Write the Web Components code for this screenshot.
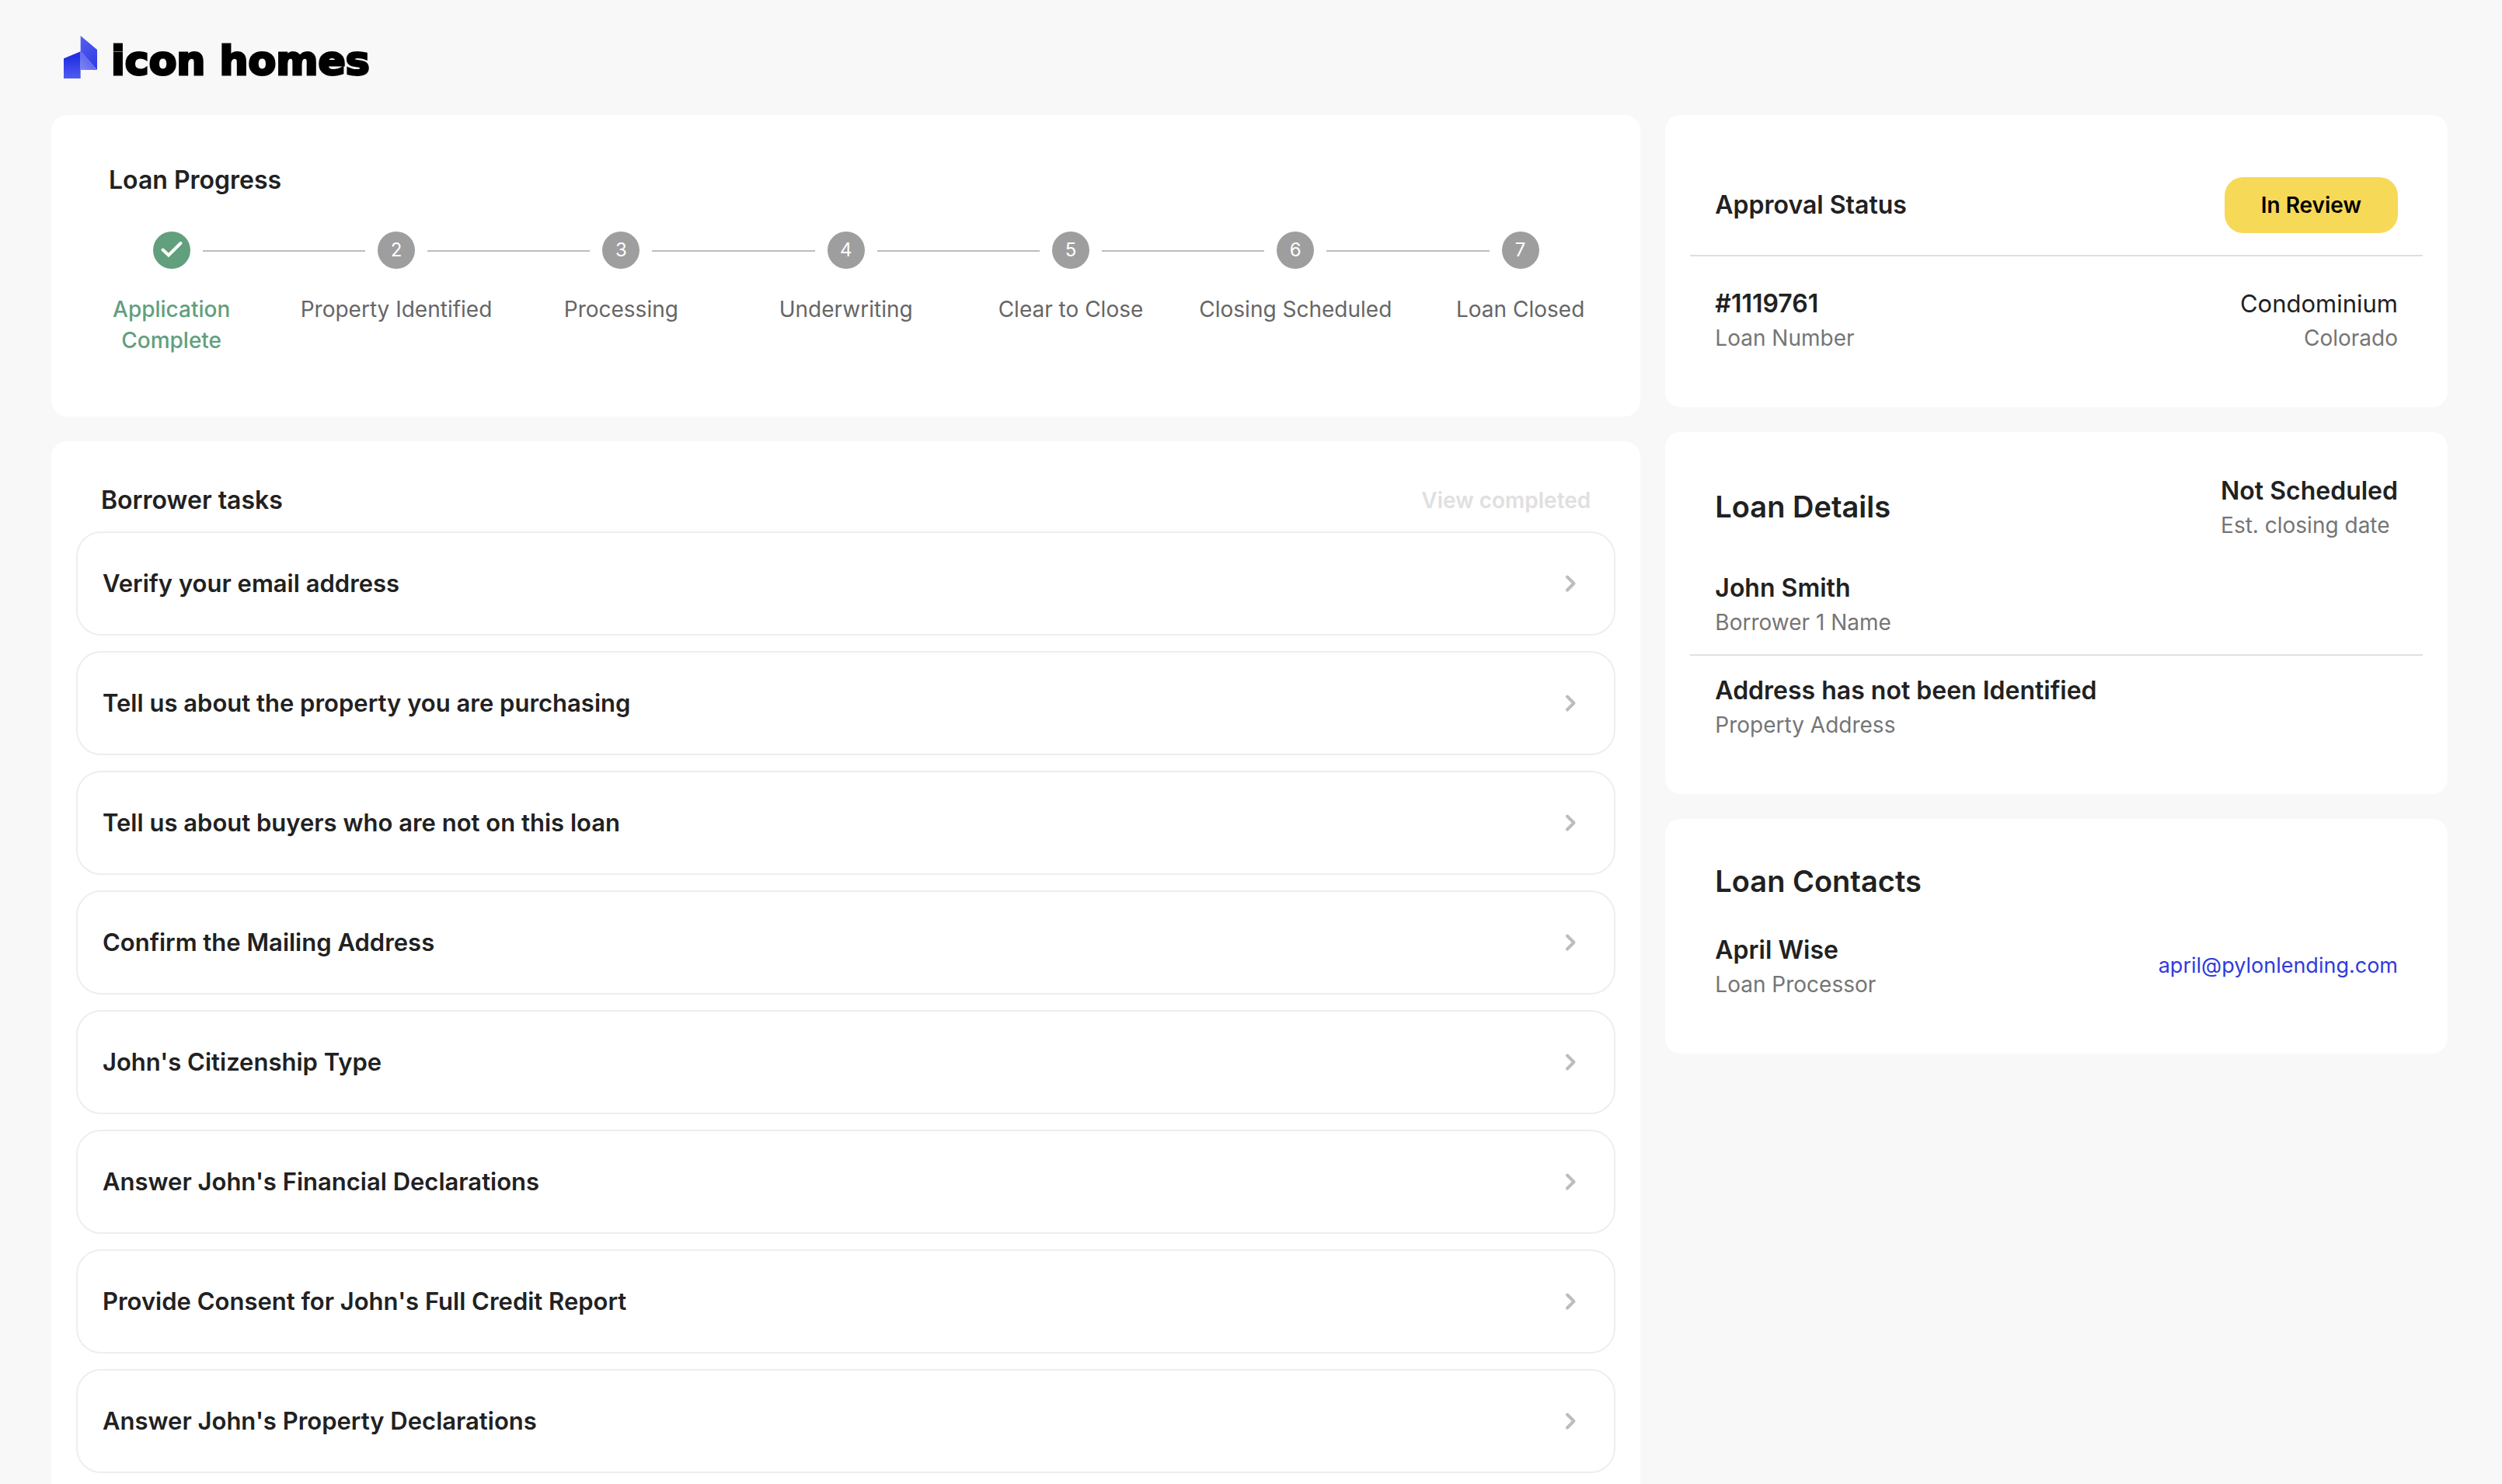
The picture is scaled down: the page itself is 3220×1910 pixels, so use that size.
<!DOCTYPE html>
<html lang="en">
<head>
<meta charset="utf-8">
<meta name="viewport" content="width=device-width, initial-scale=1">
<title>Icon Homes</title>
<style>
    body {
        margin: 0;
        background: #f8f8f8;
        color: #212121;
        font-family: Inter, "Liberation Sans", sans-serif;
        font-size: 28px;
        line-height: 40px;
    }
</style>
</head>
<body>

<loan-dashboard>
    <brand-logo slot="header">icon homes</brand-logo>

    <loan-progress heading="Loan Progress">
        <progress-step number="1" complete>Application Complete</progress-step>
        <progress-step number="2">Property Identified</progress-step>
        <progress-step number="3">Processing</progress-step>
        <progress-step number="4">Underwriting</progress-step>
        <progress-step number="5">Clear to Close</progress-step>
        <progress-step number="6">Closing Scheduled</progress-step>
        <progress-step number="7">Loan Closed</progress-step>
    </loan-progress>

    <task-list heading="Borrower tasks" action="View completed">
        <task-item>Verify your email address</task-item>
        <task-item>Tell us about the property you are purchasing</task-item>
        <task-item>Tell us about buyers who are not on this loan</task-item>
        <task-item>Confirm the Mailing Address</task-item>
        <task-item>John's Citizenship Type</task-item>
        <task-item>Answer John's Financial Declarations</task-item>
        <task-item>Provide Consent for John's Full Credit Report</task-item>
        <task-item>Answer John's Property Declarations</task-item>
    </task-list>

    <approval-status slot="side" heading="Approval Status" status="In Review">
        <info-pair label="Loan Number">#1119761</info-pair>
        <info-pair label="Colorado" align="end" light>Condominium</info-pair>
    </approval-status>

    <loan-details slot="side" heading="Loan Details">
        <info-pair slot="closing" label="Est. closing date">Not Scheduled</info-pair>
        <info-pair slot="borrower" label="Borrower 1 Name">John Smith</info-pair>
        <info-pair slot="address" label="Property Address">Address has not been Identified</info-pair>
    </loan-details>

    <loan-contacts slot="side" heading="Loan Contacts">
        <contact-row email="april@pylonlending.com">
            <info-pair label="Loan Processor">April Wise</info-pair>
        </contact-row>
    </loan-contacts>
</loan-dashboard>

<script>
// Attaches an open shadow root filled from the given markup
class BaseElement extends HTMLElement {

    connectedCallback(){
        if (this.shadowRoot) return;

        const template = document.createElement('template');
        template.innerHTML = this.render();
        this.attachShadow({mode: 'open'});
        this.shadowRoot.appendChild(template.content.cloneNode(true));
    }

    attr(name){
        return this.getAttribute(name) || '';
    }
}

// Shared by every white panel
const cardStyles = `
    :host{
        display: block;
        background: #fff;
        border-radius: 20px;
    }

    h2, h3{
        margin: 0;
        font-weight: 600;
    }

    h2{
        font-size: 38px;
        line-height: 64px;
    }

    h3{
        font-size: 32px;
        line-height: 48px;
    }

    hr{
        margin: 0 32px;
        border: 0;
        border-top: 2px solid #e0e0e0;
    }

    .row{
        display: flex;
        justify-content: space-between;
        align-items: center;
        padding: 0 64px;
    }
`;

class LoanDashboard extends BaseElement {
    render(){
        return `
        <style>
            :host{
                display: block;
                padding: 0 70px 32px 66px;
            }

            main{
                display: grid;
                grid-template-columns: repeat(3, minmax(0, 1fr));
                gap: 32px;
                align-items: start;
            }

            .column{
                display: flex;
                flex-direction: column;
                gap: 32px;
            }

            .wide{
                grid-column: span 2;
            }
        </style>
        <header><slot name="header"></slot></header>
        <main>
            <div class="column wide"><slot></slot></div>
            <div class="column"><slot name="side"></slot></div>
        </main>`;
    }
}
customElements.define('loan-dashboard', LoanDashboard);

class BrandLogo extends BaseElement {
    render(){
        return `
        <style>
            :host{
                display: flex;
                align-items: flex-end;
                gap: 18px;
                padding: 46px 16px 47px;
                color: #000;
                font: bold 52px/46px "DejaVu Sans", sans-serif;
                -webkit-text-stroke: 3px #000;
            }

            svg{
                width: 43px;
                height: 55px;
            }
        </style>
        <svg viewBox="0 0 129 165" aria-hidden="true">
            <defs>
                <linearGradient id="front" x1="0" y1="0" x2="0" y2="1">
                    <stop offset="0.2" stop-color="#232fe2"/>
                    <stop offset="1" stop-color="#4f5cf2"/>
                </linearGradient>
                <linearGradient id="tower" x1="0" y1="0" x2="0.6" y2="1">
                    <stop offset="0" stop-color="#5560f0"/>
                    <stop offset="1" stop-color="#3340e6"/>
                </linearGradient>
                <linearGradient id="base" x1="1" y1="0" x2="0" y2="1">
                    <stop offset="0.3" stop-color="#5560ee"/>
                    <stop offset="1" stop-color="#7d86f6"/>
                </linearGradient>
            </defs>
            <path fill="url(#front)" d="M0 88 65 61V165H0Z"/>
            <path fill="url(#tower)" d="M65 0 129 54V132L65 61Z"/>
            <path fill="url(#base)" d="M65 61 129 132H65Z"/>
        </svg>
        <span><slot></slot></span>`;
    }
}
customElements.define('brand-logo', BrandLogo);

class LoanProgress extends BaseElement {
    render(){
        return `
        <style>
            ${cardStyles}

            :host{
                padding: 60px 10px 78px;
            }

            h3{
                padding: 0 64px;
            }

            .steps{
                display: flex;
                margin-top: 42px;
            }
        </style>
        <h3>${this.attr('heading')}</h3>
        <div class="steps" role="list"><slot></slot></div>`;
    }
}
customElements.define('loan-progress', LoanProgress);

class ProgressStep extends BaseElement {
    render(){
        const icon = this.hasAttribute('complete')
            ? '<svg viewBox="0 0 48 48" aria-label="Complete"><path d="M12.5 23.5 20 30.5 35.5 15"/></svg>'
            : this.attr('number');

        return `
        <style>
            :host{
                flex: 1 1 0;
                min-width: 0;
                color: #666;
                text-align: center;
            }

            :host([complete]){
                color: #629f7d;
                font-weight: 500;
            }

            .track{
                display: flex;
                gap: 16px;
            }

            /* half of the connector on each side of the circle */
            .line{
                flex: 1;
                box-sizing: border-box;
                height: 24px;
                align-self: flex-end;
                border-top: 2px solid #bdbdbd;
            }

            :host(:first-child) .before,
            :host(:last-child) .after{
                border-color: transparent;
            }

            .circle{
                width: 48px;
                height: 48px;
                border-radius: 50%;
                background: #9e9e9e;
                color: #fff;
                font-size: 24px;
                line-height: 48px;
            }

            :host([complete]) .circle{
                background: #629f7d;
            }

            svg{
                display: block;
                fill: none;
                stroke: #fff;
                stroke-width: 4;
                stroke-linecap: round;
            }

            .label{
                padding: 32px 16px 0;
            }
        </style>
        <div class="track">
            <div class="line before"></div>
            <div class="circle">${icon}</div>
            <div class="line after"></div>
        </div>
        <div class="label"><slot></slot></div>`;
    }

    connectedCallback(){
        super.connectedCallback();
        this.setAttribute('role', 'listitem');
    }
}
customElements.define('progress-step', ProgressStep);

class TaskList extends BaseElement {
    render(){
        return `
        <style>
            ${cardStyles}

            :host{
                padding: 32px;
            }

            .row{
                padding: 20px 32px 16px;
            }

            button{
                padding: 0;
                border: 0;
                background: none;
                color: #e0e0e0;
                font: inherit;
                font-weight: 600;
            }

            .tasks{
                display: flex;
                flex-direction: column;
                gap: 20px;
            }
        </style>
        <div class="row">
            <h3>${this.attr('heading')}</h3>
            <button type="button" disabled>${this.attr('action')}</button>
        </div>
        <div class="tasks"><slot></slot></div>`;
    }
}
customElements.define('task-list', TaskList);

class TaskItem extends BaseElement {
    render(){
        return `
        <style>
            :host{
                display: block;
            }

            button{
                display: flex;
                justify-content: space-between;
                align-items: center;
                width: 100%;
                padding: 41px 32px;
                border: 2px solid #eee;
                border-radius: 32px;
                background: #fff;
                color: inherit;
                font: inherit;
                font-size: 31px;
                font-weight: 600;
                line-height: 48px;
                text-align: left;
                cursor: pointer;
            }

            svg{
                width: 48px;
                height: 48px;
                fill: none;
                stroke: #bdbdbd;
                stroke-width: 4;
                stroke-linecap: round;
                stroke-linejoin: round;
            }
        </style>
        <button type="button">
            <span><slot></slot></span>
            <svg viewBox="0 0 48 48" aria-hidden="true"><path d="M20 15.5 28.5 24 20 32.5"/></svg>
        </button>`;
    }
}
customElements.define('task-item', TaskItem);

// A value with its caption underneath
class InfoPair extends BaseElement {
    render(){
        return `
        <style>
            :host{
                display: block;
            }

            :host([align="end"]){
                text-align: right;
            }

            .value{
                font-size: 32px;
                font-weight: 600;
                line-height: 48px;
            }

            :host([light]) .value{
                font-size: 31px;
                font-weight: 400;
            }

            .label{
                color: #757575;
            }
        </style>
        <div class="value"><slot></slot></div>
        <div class="label">${this.attr('label')}</div>`;
    }
}
customElements.define('info-pair', InfoPair);

class ApprovalStatus extends BaseElement {
    render(){
        return `
        <style>
            ${cardStyles}

            :host{
                padding: 80px 0 69px;
            }

            hr{
                margin-top: 28px;
                margin-bottom: 37px;
            }

            .badge{
                padding: 16px 47px;
                border-radius: 24px;
                background: #f7d958;
                color: #000;
                font-weight: 600;
            }
        </style>
        <div class="row">
            <h3>${this.attr('heading')}</h3>
            <span class="badge">${this.attr('status')}</span>
        </div>
        <hr>
        <div class="row"><slot></slot></div>`;
    }
}
customElements.define('approval-status', ApprovalStatus);

class LoanDetails extends BaseElement {
    render(){
        return `
        <style>
            ${cardStyles}

            :host{
                padding: 52px 0 69px;
            }

            .borrower{
                padding-top: 37px;
                padding-bottom: 21px;
            }

            .address{
                padding-top: 21px;
            }
        </style>
        <div class="row">
            <h2>${this.attr('heading')}</h2>
            <slot name="closing"></slot>
        </div>
        <div class="row borrower"><slot name="borrower"></slot></div>
        <hr>
        <div class="row address"><slot name="address"></slot></div>`;
    }
}
customElements.define('loan-details', LoanDetails);

class LoanContacts extends BaseElement {
    render(){
        return `
        <style>
            ${cardStyles}

            :host{
                padding: 48px 64px 69px;
            }

            h2{
                margin-bottom: 33px;
            }
        </style>
        <h2>${this.attr('heading')}</h2>
        <slot></slot>`;
    }
}
customElements.define('loan-contacts', LoanContacts);

class ContactRow extends BaseElement {
    render(){
        const email = this.attr('email');

        return `
        <style>
            :host{
                display: flex;
                justify-content: space-between;
                align-items: center;
            }

            a{
                color: #303bdc;
                font-size: 27px;
                text-decoration: none;
            }
        </style>
        <slot></slot>
        <a href="mailto:${email}">${email}</a>`;
    }
}
customElements.define('contact-row', ContactRow);
</script>
</body>
</html>
